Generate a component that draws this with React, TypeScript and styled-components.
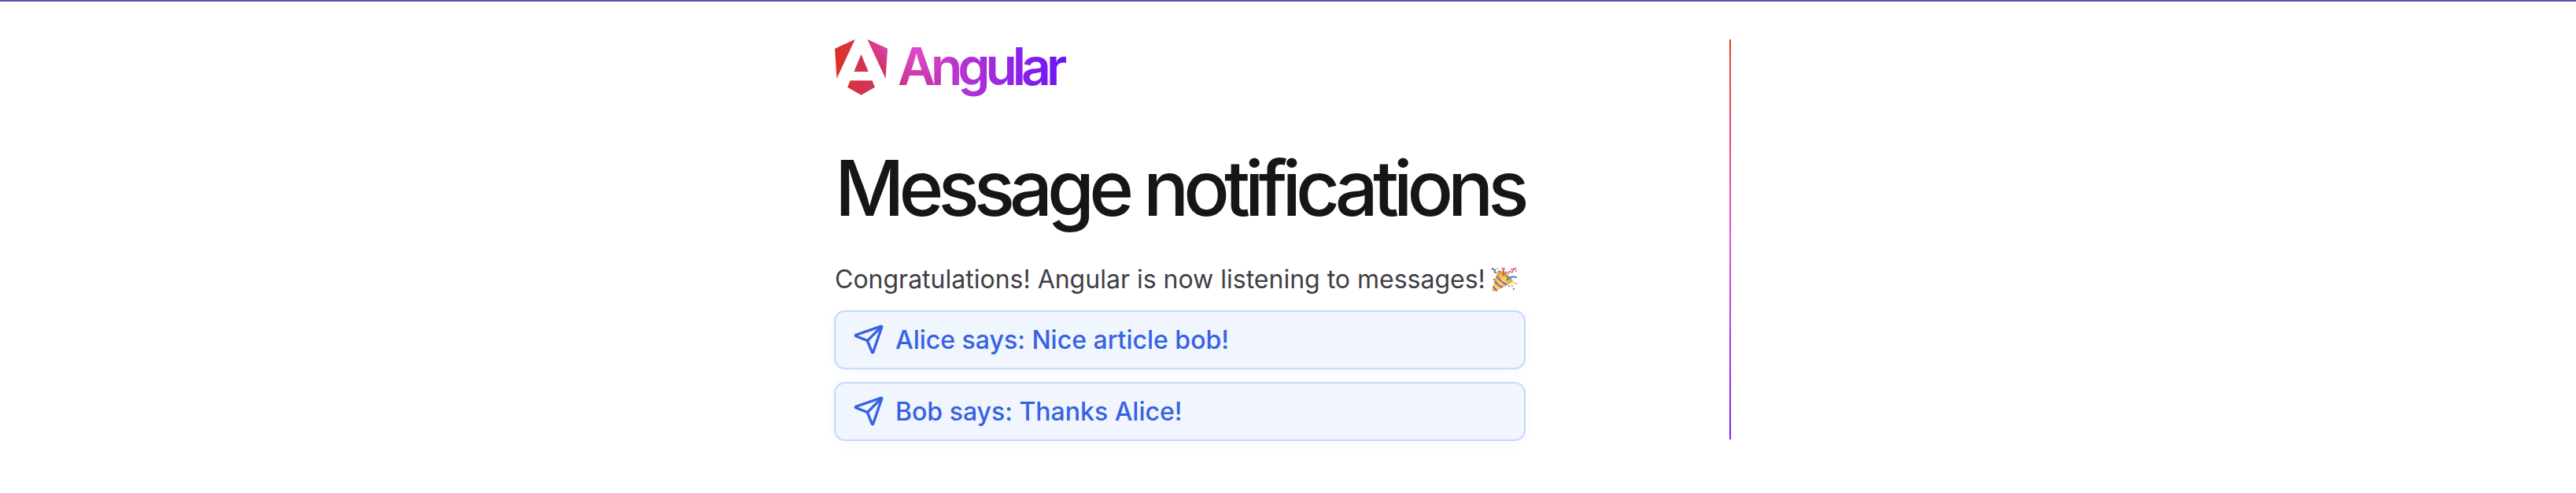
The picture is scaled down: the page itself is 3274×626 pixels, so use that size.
import React from "react";
import styled, { createGlobalStyle } from "styled-components";

const GlobalStyle = createGlobalStyle`
  * { box-sizing: border-box; }
  body { margin: 0; background: #ffffff; font-family: Inter, "Liberation Sans", sans-serif; color: #161618; }
`;

const Page = styled.div`
  border-top: 2px solid #5c4fb0;
`;

const Main = styled.main`
  display: flex;
  justify-content: center;
  gap: 259px;
  padding: 48px 32px 64px;
`;

const Intro = styled.section`
  flex: 0 1 879px;
  min-width: 0;
`;

const Header = styled.header`
  padding-left: 1px;
`;

const Logo = styled.svg`
  display: block;
  width: 296px;
  height: 72px;
  overflow: visible;
`;

const Wordmark = styled.text`
  font-family: Inter, sans-serif;
  font-size: 219px;
  font-weight: 600;
  letter-spacing: -20px;
`;

const Title = styled.h1`
  margin: 67px 0 0;
  font-size: 97px;
  font-weight: 500;
  line-height: 100px;
  letter-spacing: -7px;
  white-space: nowrap;
`;

const Lead = styled.p`
  display: flex;
  align-items: center;
  gap: 8px;
  margin: 44px 0 17px;
  font-size: 32px;
  line-height: 44px;
  color: #403e44;
  white-space: nowrap;
`;

const Popper = styled.svg`
  flex: none;
  width: 32px;
  height: 32px;
`;

const Messages = styled.ul`
  display: flex;
  flex-direction: column;
  gap: 16px;
  margin: 0;
  padding: 0;
  list-style: none;
`;

const Message = styled.li`
  display: flex;
  align-items: center;
  gap: 14px;
  height: 75px;
  padding: 0 22px;
  border: 2px solid #c3dafb;
  border-radius: 14px;
  background: #f0f5fe;
  box-shadow: 0 4px 16px rgba(59, 100, 230, 0.03);
  color: #3662e3;
  font-size: 32px;
  font-weight: 500;
`;

const SendIcon = styled.svg`
  flex: none;
  width: 40px;
  height: 40px;
  margin-bottom: 2px;
  fill: none;
  stroke: currentColor;
  stroke-width: 2;
  stroke-linecap: round;
  stroke-linejoin: round;
`;

const Divider = styled.div`
  flex: none;
  width: 2px;
  margin-right: 14px;
  height: 508px;
  background: linear-gradient(180deg, #eb4025 0%, #e250d5 50%, #7a20f5 100%);
`;

const messages = ["Alice says: Nice article bob!", "Bob says: Thanks Alice!"];

function AngularLogo() {
  return (
    <Logo viewBox="0 0 982 239" role="img" aria-label="Angular">
      <defs>
        <linearGradient id="base" gradientUnits="userSpaceOnUse" x1="0" y1="192" x2="982" y2="192">
          <stop offset="0" stopColor="#dd3226" />
          <stop offset="0.526" stopColor="#b935d2" />
          <stop offset="1" stopColor="#6a12f8" />
        </linearGradient>
        <radialGradient id="glow" gradientUnits="userSpaceOnUse" cx="305" cy="-62" r="206">
          <stop offset="0" stopColor="#e84ae2" />
          <stop offset="0.707" stopColor="#e84ae2" stopOpacity="0.5" />
          <stop offset="1" stopColor="#e84ae2" stopOpacity="0" />
        </radialGradient>
        <radialGradient id="wordGlow" gradientUnits="userSpaceOnUse" cx="345" cy="15" r="190">
          <stop offset="0" stopColor="#e04ad4" />
          <stop offset="0.4" stopColor="#e04ad4" stopOpacity="0.7" />
          <stop offset="1" stopColor="#e04ad4" stopOpacity="0" />
        </radialGradient>
      </defs>
      {["base", "glow"].map((fill) => (
        <path
          key={fill}
          fill={`url(#${fill})`}
          d="M222.077 39.192l-8.019 125.923L137.387 0l84.69 39.192zm-53.105 162.825l-57.933 33.056-57.934-33.056 11.783-28.556h92.301l11.783 28.556zM111.039 62.675l30.357 73.803H80.681l30.358-73.803zM7.937 165.115L0 39.192 84.69 0 7.937 165.115z"
        />
      ))}
      <Wordmark x="265" y="191" fill="url(#base)">Angular</Wordmark>
      <Wordmark x="265" y="191" fill="url(#wordGlow)" aria-hidden="true">Angular</Wordmark>
    </Logo>
  );
}

function PartyPopper() {
  return (
    <Popper viewBox="0 0 32 32" role="img" aria-label="party popper">
      <defs>
        <linearGradient id="cone" x1="0" y1="0" x2="1" y2="1">
          <stop offset="0.1" stopColor="#c59a35" />
          <stop offset="0.5" stopColor="#f6d85a" />
          <stop offset="1" stopColor="#b98526" />
        </linearGradient>
      </defs>
      <path d="M8 4Q20 7 27 19L4 31Q0 33 0 29Z" fill="url(#cone)" />
      <path d="M6 12Q12 19 19 23M4 18Q8 24 14 26M2 25Q4 29 7 30" fill="none" stroke="#9346ca" strokeWidth="1.8" />
      <path d="M9 4Q19 6 27 18Q17 15 9 4Z" fill="#c99a38" />
      <path d="M14 11Q17 6 13 1" fill="none" stroke="#e5516c" strokeWidth="2" />
      <path d="M19 17Q23 11 32 13" fill="none" stroke="#487be2" strokeWidth="2" />
      <path d="M1 1Q0 4 3 3Q6 4 3 6Q4 8 6 7" fill="none" stroke="#3c68cb" strokeWidth="1.5" />
      <path d="M21 9Q21 5 24 6Q27 8 27 4Q27 1 29 3L31 1" fill="none" stroke="#dc4c72" strokeWidth="1.5" />
      <g fill="#e65a7c"><circle cx="3" cy="16" r="1.3" /><circle cx="25" cy="3" r="1" /><circle cx="28" cy="28" r="1.2" /><circle cx="31" cy="5" r="1" /></g>
      <g fill="#4b7be2"><circle cx="16" cy="2" r="1" /><circle cx="18" cy="7" r="1.2" /><circle cx="22" cy="24" r="1" /></g>
      <g fill="#e5a756"><circle cx="7" cy="2" r="1" /><circle cx="26" cy="24" r="1.3" /><circle cx="31" cy="21" r="1.3" /><circle cx="28" cy="20" r="1" /></g>
    </Popper>
  );
}

export default function App() {
  return (
    <Page>
      <GlobalStyle />
      <Main>
        <Intro>
          <Header>
            <AngularLogo />
            <Title>Message notifications</Title>
            <Lead>
              Congratulations! Angular is now listening to messages!
              <PartyPopper />
            </Lead>
          </Header>
          <Messages>
            {messages.map((text) => (
              <Message key={text}>
                <SendIcon viewBox="0 0 24 24" aria-hidden="true">
                  <path d="M14.536 21.686a.5.5 0 0 0 .937-.024l6.5-19a.496.496 0 0 0-.635-.635l-19 6.5a.5.5 0 0 0-.024.937l7.93 3.18a2 2 0 0 1 1.112 1.11z" />
                  <path d="m21.854 2.147-10.94 10.939" />
                </SendIcon>
                {text}
              </Message>
            ))}
          </Messages>
        </Intro>
        <Divider role="separator" aria-orientation="vertical" />
      </Main>
    </Page>
  );
}
